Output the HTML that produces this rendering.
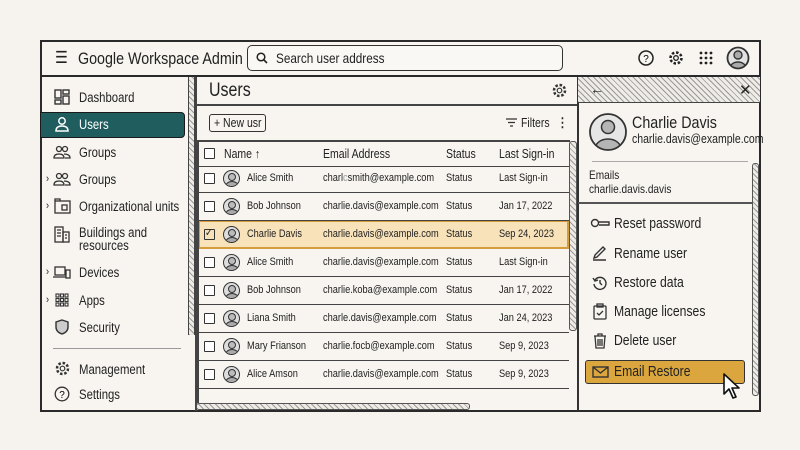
<!DOCTYPE html>
<html><head><meta charset="utf-8"><style>
*{margin:0;padding:0;box-sizing:border-box}
body{width:800px;height:450px;background:#f6f2ee;font-family:"Liberation Sans",sans-serif;color:#222;position:relative;overflow:hidden}
.a{position:absolute}
.frame{left:40px;top:40px;width:721px;height:372px;border:2px solid #2a2a2a;background:#f8f5f1}
.hatch{background:repeating-linear-gradient(45deg,#9a9a9a 0 1px,#efebe6 1px 4px)}
.t,.cell,.mi{position:absolute;white-space:nowrap;transform:scaleX(.84);transform-origin:0 0}
.side{font-size:13.5px}
.row{position:absolute;left:198px;width:371px;height:28px;border-bottom:1.5px solid #444}
.cb{position:absolute;width:11px;height:11px;border:1.5px solid #333;border-radius:1px;background:#fff}
.av{position:absolute;width:17px;height:17px;border:1.5px solid #333;border-radius:50%;background:#ddd;overflow:hidden}
.av:before{content:"";position:absolute;left:4px;top:2px;width:6px;height:6px;border-radius:50%;border:1.2px solid #333;background:#bbb}
.av:after{content:"";position:absolute;left:1px;top:10px;width:12px;height:9px;border-radius:50% 50% 0 0;border:1.2px solid #333;background:#aaa}
.cell{top:7px;font-size:11px}
.mi{left:614px;font-size:14.5px}
</style></head><body>
<div class="a frame"></div>
<div class="a" style="left:40px;top:75px;width:721px;height:2px;background:#2a2a2a"></div>
<div class="t" style="left:55px;top:48px;font-size:17px">☰</div>
<div class="t" style="left:78px;top:49px;font-size:17px">Google Workspace Admin</div>
<div class="a" style="left:247px;top:45px;width:316px;height:26px;border:1.5px solid #333;border-radius:5px;background:#faf8f5"></div>
<svg class="a" style="left:256px;top:52px" width="12" height="12"><circle cx="5" cy="5" r="3.8" fill="none" stroke="#222" stroke-width="1.5"/><line x1="8" y1="8" x2="11" y2="11" stroke="#222" stroke-width="1.6"/></svg>
<div class="t" style="left:276px;top:50px;font-size:14px">Search user address</div>
<svg class="a" style="left:637px;top:49px" width="18" height="18"><circle cx="9" cy="9" r="7" fill="none" stroke="#222" stroke-width="1.5"/><text x="9" y="13" font-size="10" text-anchor="middle" font-family="Liberation Sans">?</text></svg>
<svg class="a" style="left:667px;top:49px" width="18" height="18"><circle cx="9" cy="9" r="5.5" fill="none" stroke="#222" stroke-width="2.5" stroke-dasharray="2.5 1.8"/><circle cx="9" cy="9" r="2.3" fill="none" stroke="#222" stroke-width="1.3"/></svg>
<svg class="a" style="left:699px;top:51px" width="14" height="14" fill="#222"><circle cx="2" cy="2" r="1.4"/><circle cx="7" cy="2" r="1.4"/><circle cx="12" cy="2" r="1.4"/><circle cx="2" cy="7" r="1.4"/><circle cx="7" cy="7" r="1.4"/><circle cx="12" cy="7" r="1.4"/><circle cx="2" cy="12" r="1.4"/><circle cx="7" cy="12" r="1.4"/><circle cx="12" cy="12" r="1.4"/></svg>
<svg class="a" style="left:726px;top:46px" width="24" height="24"><defs><clipPath id="c1"><circle cx="12" cy="12" r="10.5"/></clipPath></defs><circle cx="12" cy="12" r="10.5" fill="#e2e2e2"/><g clip-path="url(#c1)" stroke="#333" stroke-width="1.4" fill="#aaa"><circle cx="12" cy="9" r="4"/><ellipse cx="12" cy="22" rx="8" ry="6"/></g><circle cx="12" cy="12" r="10.5" fill="none" stroke="#333" stroke-width="1.8"/></svg>
<!-- sidebar -->
<div class="a hatch" style="left:188px;top:77px;width:7px;height:258px;border-left:1.5px solid #444;border-right:1.5px solid #444"></div>
<div class="a" style="left:195px;top:77px;width:1.5px;height:334px;background:#444"></div>
<div class="a" style="left:40px;top:112px;width:145px;height:26px;background:#1f5d5e;border:1.5px solid #1a1a1a;border-radius:0 4px 4px 0"></div>
<div class="t side" style="left:79px;top:90px">Dashboard</div>
<div class="t side" style="left:79px;top:117px;color:#fff">Users</div>
<div class="t side" style="left:79px;top:145px">Groups</div>
<div class="t side" style="left:79px;top:172px">Groups</div>
<div class="t side" style="left:79px;top:199px">Organizational units</div>
<div class="t side" style="left:79px;top:226px;line-height:13px">Buildings and<br>resources</div>
<div class="t side" style="left:79px;top:265px">Devices</div>
<div class="t side" style="left:79px;top:293px">Apps</div>
<div class="t side" style="left:79px;top:320px">Security</div>
<div class="t side" style="left:79px;top:362px">Management</div>
<div class="t side" style="left:79px;top:387px">Settings</div>
<div class="t" style="left:46px;top:173px;font-size:11px">›</div>
<div class="t" style="left:46px;top:200px;font-size:11px">›</div>
<div class="t" style="left:46px;top:266px;font-size:11px">›</div>
<div class="t" style="left:46px;top:294px;font-size:11px">›</div>
<div class="a" style="left:53px;top:348px;width:128px;height:1px;background:#999"></div>
<svg class="a" style="left:54px;top:89px" width="16" height="16" fill="none" stroke="#333" stroke-width="1.4"><rect x="1" y="1" width="6" height="8"/><rect x="9" y="1" width="6" height="4"/><rect x="1" y="11" width="6" height="4"/><rect x="9" y="7" width="6" height="8"/></svg>
<svg class="a" style="left:54px;top:116px" width="16" height="16" fill="none" stroke="#fff" stroke-width="1.5"><circle cx="8" cy="5" r="3.2"/><path d="M2 15c0-4 3-5 6-5s6 1 6 5z"/></svg>
<svg class="a" style="left:53px;top:144px" width="18" height="16" fill="none" stroke="#333" stroke-width="1.3"><circle cx="6" cy="5" r="2.5"/><circle cx="12" cy="5" r="2.5"/><path d="M1 14c0-3 2-4 5-4s5 1 5 4zM11 10c3 0 6 1 6 4h-5"/></svg>
<svg class="a" style="left:53px;top:171px" width="18" height="16" fill="none" stroke="#333" stroke-width="1.3"><circle cx="6" cy="5" r="2.5"/><circle cx="12" cy="5" r="2.5"/><path d="M1 14c0-3 2-4 5-4s5 1 5 4zM11 10c3 0 6 1 6 4h-5"/></svg>
<svg class="a" style="left:54px;top:198px" width="17" height="16" fill="none" stroke="#333" stroke-width="1.3"><rect x="1" y="3" width="15" height="12"/><path d="M1 3V1h5v2"/><rect x="8" y="7" width="5" height="5"/></svg>
<svg class="a" style="left:54px;top:226px" width="16" height="17" fill="none" stroke="#333" stroke-width="1.3"><rect x="1" y="1" width="8" height="15"/><rect x="9" y="6" width="6" height="10"/><path d="M3 4h4M3 7h4M3 10h4M11 9h2M11 12h2"/></svg>
<svg class="a" style="left:53px;top:265px" width="18" height="14" fill="none" stroke="#333" stroke-width="1.3"><rect x="2" y="2" width="10" height="8"/><path d="M0 12h13"/><rect x="13" y="5" width="4" height="8"/></svg>
<svg class="a" style="left:55px;top:293px" width="14" height="14" fill="none" stroke="#333" stroke-width="1.1"><rect x="1" y="1" width="3" height="3"/><rect x="5.5" y="1" width="3" height="3"/><rect x="10" y="1" width="3" height="3"/><rect x="1" y="5.5" width="3" height="3"/><rect x="5.5" y="5.5" width="3" height="3"/><rect x="10" y="5.5" width="3" height="3"/><rect x="1" y="10" width="3" height="3"/><rect x="5.5" y="10" width="3" height="3"/><rect x="10" y="10" width="3" height="3"/></svg>
<svg class="a" style="left:55px;top:319px" width="14" height="16" fill="#ccc" stroke="#333" stroke-width="1.4"><path d="M7 1l6 2v5c0 4-3 6-6 7-3-1-6-3-6-7V3z"/></svg>
<svg class="a" style="left:54px;top:360px" width="17" height="17"><circle cx="8.5" cy="8.5" r="5.5" fill="none" stroke="#333" stroke-width="2.5" stroke-dasharray="2.5 1.8"/><circle cx="8.5" cy="8.5" r="2.3" fill="none" stroke="#333" stroke-width="1.2"/></svg>
<svg class="a" style="left:54px;top:386px" width="16" height="16"><circle cx="8" cy="8" r="6.8" fill="none" stroke="#333" stroke-width="1.3"/><text x="8" y="12" font-size="10" text-anchor="middle" font-family="Liberation Sans">?</text></svg>
<!-- main -->
<div class="t" style="left:209px;top:80px;font-size:19px">Users</div>
<svg class="a" style="left:551px;top:82px" width="17" height="17"><circle cx="8.5" cy="8.5" r="5.5" fill="none" stroke="#333" stroke-width="2.5" stroke-dasharray="2.5 1.8"/><circle cx="8.5" cy="8.5" r="2.3" fill="none" stroke="#333" stroke-width="1.2"/></svg>
<div class="a" style="left:196px;top:104px;width:381px;height:1.5px;background:#444"></div>
<div class="a" style="left:209px;top:114px;width:57px;height:18px;border:1.5px solid #333;border-radius:3px"></div>
<div class="t" style="left:214px;top:116px;font-size:12.5px">+ New usr</div>
<svg class="a" style="left:506px;top:118px" width="11" height="9" stroke="#333" stroke-width="1.3"><path d="M0 1h11M2 4.5h7M4 8h3"/></svg>
<div class="t" style="left:521px;top:116px;font-size:12.5px">Filters</div>
<div class="t" style="left:557px;top:115px;font-size:13px;font-weight:bold">⋮</div>
<div class="a" style="left:196px;top:140px;width:374px;height:1.5px;background:#444"></div>
<div class="a hatch" style="left:569px;top:141px;width:8px;height:190px;border:1.2px solid #555;border-radius:3px"></div>
<div class="row" style="top:140px;height:27px"></div>
<div class="cb" style="left:204px;top:148px"></div>
<div class="t" style="left:224px;top:147px;font-size:12.5px">Name ↑</div>
<div class="t" style="left:323px;top:147px;font-size:12.5px">Email Address</div>
<div class="t" style="left:446px;top:147px;font-size:12.5px">Status</div>
<div class="t" style="left:499px;top:147px;font-size:12.5px">Last Sign-in</div>
<div class="a" style="left:198px;top:220px;width:371px;height:29px;background:#f7e2ba;border:2px solid #d49c3b"></div>

<div class="row" style="top:165px"><div class="cb" style="left:6px;top:8px"></div><div class="av" style="left:25px;top:5px"></div><div class="cell" style="left:49px">Alice Smith</div><div class="cell" style="left:125px">charl<span style="color:#999">c</span>smith@example.com</div><div class="cell" style="left:248px">Status</div><div class="cell" style="left:301px">Last Sign-in</div></div>
<div class="row" style="top:193px"><div class="cb" style="left:6px;top:8px"></div><div class="av" style="left:25px;top:5px"></div><div class="cell" style="left:49px">Bob Johnson</div><div class="cell" style="left:125px">charlie.davis@example.com</div><div class="cell" style="left:248px">Status</div><div class="cell" style="left:301px">Jan 17, 2022</div></div>
<div class="row" style="top:221px;border:none"><div class="cb" style="left:6px;top:8px;background:#f7e2ba"></div><div class="t" style="left:7px;top:5px;font-size:11px">✓</div><div class="av" style="left:25px;top:5px"></div><div class="cell" style="left:49px">Charlie Davis</div><div class="cell" style="left:125px">charlie.davis@example.com</div><div class="cell" style="left:248px">Status</div><div class="cell" style="left:301px">Sep 24, 2023</div></div>
<div class="row" style="top:249px"><div class="cb" style="left:6px;top:8px"></div><div class="av" style="left:25px;top:5px"></div><div class="cell" style="left:49px">Alice Smith</div><div class="cell" style="left:125px">charlie.davis@example.com</div><div class="cell" style="left:248px">Status</div><div class="cell" style="left:301px">Last Sign-in</div></div>
<div class="row" style="top:277px"><div class="cb" style="left:6px;top:8px"></div><div class="av" style="left:25px;top:5px"></div><div class="cell" style="left:49px">Bob Johnson</div><div class="cell" style="left:125px">charlie.koba@example.com</div><div class="cell" style="left:248px">Status</div><div class="cell" style="left:301px">Jan 17, 2022</div></div>
<div class="row" style="top:305px"><div class="cb" style="left:6px;top:8px"></div><div class="av" style="left:25px;top:5px"></div><div class="cell" style="left:49px">Liana Smith</div><div class="cell" style="left:125px">charle.davis@example.com</div><div class="cell" style="left:248px">Status</div><div class="cell" style="left:301px">Jan 24, 2023</div></div>
<div class="row" style="top:333px"><div class="cb" style="left:6px;top:8px"></div><div class="av" style="left:25px;top:5px"></div><div class="cell" style="left:49px">Mary Frianson</div><div class="cell" style="left:125px">charlie.focb@example.com</div><div class="cell" style="left:248px">Status</div><div class="cell" style="left:301px">Sep 9, 2023</div></div>
<div class="row" style="top:361px"><div class="cb" style="left:6px;top:8px"></div><div class="av" style="left:25px;top:5px"></div><div class="cell" style="left:49px">Alice Amson</div><div class="cell" style="left:125px">charlie.davis@example.com</div><div class="cell" style="left:248px">Status</div><div class="cell" style="left:301px">Sep 9, 2023</div></div>
<div class="a" style="left:197px;top:141px;width:1.5px;height:262px;background:#444"></div>
<div class="a hatch" style="left:196px;top:403px;width:274px;height:7px;border:1px solid #555;border-radius:3px"></div>
<!-- right panel -->
<div class="a" style="left:577px;top:77px;width:1.5px;height:334px;background:#333"></div>
<div class="a hatch" style="left:578px;top:77px;width:182px;height:26px;border-bottom:1.5px solid #444"></div>
<div class="a" style="left:590px;top:81px;font-size:14px">←</div>
<div class="a" style="left:739px;top:81px;font-size:15px">✕</div>
<svg class="a" style="left:588px;top:112px" width="40" height="40"><defs><clipPath id="c2"><circle cx="20" cy="20" r="18"/></clipPath></defs><circle cx="20" cy="20" r="18" fill="#e6e6e6"/><g clip-path="url(#c2)" stroke="#333" stroke-width="1.5" fill="#b5b5b5"><circle cx="20" cy="15" r="6.5"/><ellipse cx="20" cy="37" rx="13" ry="10"/></g><circle cx="20" cy="20" r="18" fill="none" stroke="#333" stroke-width="1.8"/></svg>
<div class="t" style="left:632px;top:113px;font-size:17px">Charlie Davis</div>
<div class="t" style="left:632px;top:132px;font-size:12.5px">charlie.davis@example.com</div>
<div class="a" style="left:592px;top:161px;width:156px;height:1px;background:#aaa"></div>
<div class="t" style="left:589px;top:168px;font-size:12px">Emails</div>
<div class="t" style="left:589px;top:182px;font-size:12px">charlie.davis.davis</div>
<div class="a" style="left:578px;top:202px;width:176px;height:1.5px;background:#555"></div>
<div class="a hatch" style="left:752px;top:163px;width:7px;height:233px;border:1px solid #555;border-radius:3px"></div>
<div class="mi" style="top:216px">Reset password</div>
<div class="mi" style="top:246px">Rename user</div>
<div class="mi" style="top:275px">Restore data</div>
<div class="mi" style="top:304px">Manage licenses</div>
<div class="mi" style="top:333px">Delete user</div>
<div class="a" style="left:585px;top:360px;width:160px;height:24px;background:#dba63d;border:1.5px solid #333;border-radius:3px"></div>
<div class="mi" style="top:364px">Email Restore</div>
<svg class="a" style="left:590px;top:217px" width="20" height="12" fill="none" stroke="#333" stroke-width="1.4"><circle cx="5" cy="6" r="3.5"/><path d="M9 5h10v3H9"/></svg>
<svg class="a" style="left:592px;top:245px" width="16" height="16" fill="none" stroke="#333" stroke-width="1.4"><path d="M2 13l1-3 8-8 2 2-8 8zM1 15h13"/></svg>
<svg class="a" style="left:592px;top:275px" width="16" height="16" fill="none" stroke="#333" stroke-width="1.4"><path d="M3 5a6 6 0 1 1-1 4"/><path d="M1 3l2 3 3-1"/><path d="M8 5v3l2 2"/></svg>
<svg class="a" style="left:593px;top:303px" width="14" height="17" fill="none" stroke="#333" stroke-width="1.3"><rect x="1" y="3" width="12" height="13" rx="1"/><rect x="4" y="1" width="6" height="3"/><path d="M4 10l2 2 4-4"/></svg>
<svg class="a" style="left:593px;top:333px" width="14" height="16" fill="none" stroke="#333" stroke-width="1.3"><path d="M1 3h12M5 3V1h4v2M2 3l1 12h8l1-12M5 6v7M7 6v7M9 6v7"/></svg>
<svg class="a" style="left:592px;top:366px" width="17" height="12" fill="none" stroke="#333" stroke-width="1.4"><rect x="1" y="1" width="15" height="10"/><path d="M1 1l7.5 6L16 1"/></svg>
<svg class="a" style="left:722px;top:372px" width="22" height="28"><path d="M2 2v20l5-5 4 9 3-1-4-9h7z" fill="#fff" stroke="#111" stroke-width="1.6" stroke-linejoin="round"/></svg>
</body></html>
